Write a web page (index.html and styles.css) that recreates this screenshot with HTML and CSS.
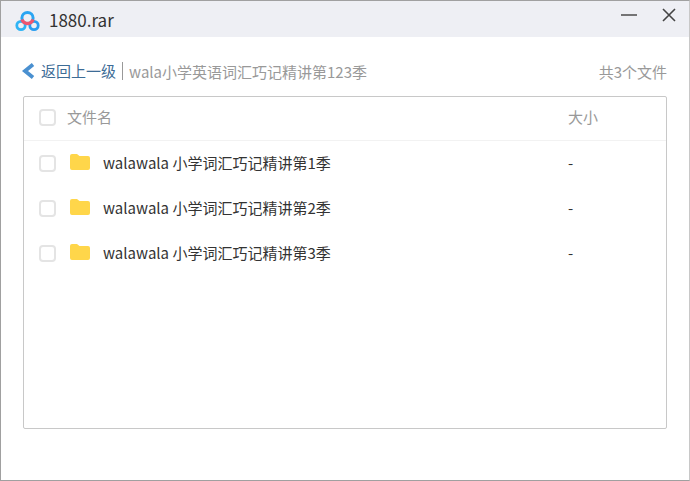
FILE: index.html
```html
<!DOCTYPE html>
<html lang="zh-CN">
<head>
<meta charset="utf-8">
<title>1880.rar</title>
<link rel="stylesheet" href="styles.css">
</head>
<body>
<div class="window">
  <header class="titlebar">
    <svg class="logo" width="26" height="22" viewBox="0 0 26 22" fill="none">
      <circle cx="12.5" cy="8" r="5.6" stroke="#2aa5f2" stroke-width="3"/>
      <circle cx="6" cy="15.5" r="4.2" stroke="#2fb4f5" stroke-width="2.8"/>
      <circle cx="19" cy="15.5" r="4.2" stroke="#2a9df0" stroke-width="2.8"/>
      <path d="M7 9.5a5.8 5.8 0 0 0 11 0" fill="none" stroke="#f0566e" stroke-width="3.4"/>
    </svg>
    <span class="filename">1880.rar</span>
    <div class="controls">
      <svg width="16" height="16" viewBox="0 0 16 16"><path d="M0 8h16" stroke="#555" stroke-width="1.6"/></svg>
      <svg width="16" height="16" viewBox="0 0 16 16"><path d="M2 2l12 12M14 2L2 14" stroke="#444" stroke-width="1.6"/></svg>
    </div>
  </header>
  <main class="content">
    <div class="crumbs">
      <svg class="back-icon" width="14" height="16" viewBox="0 0 14 16"><path d="M12 1.5L4 8l8 6.5" fill="none" stroke="#4a90d0" stroke-width="3.8"/></svg>
      <span class="back">返回上一级</span>
      <span class="path">wala小学英语词汇巧记精讲第123季</span>
      <span class="count">共3个文件</span>
    </div>
    <section class="card">
      <div class="row head">
        <span class="check"></span>
        <span class="name">文件名</span>
        <span class="size">大小</span>
      </div>
      <div class="row item">
        <span class="check"></span>
        <svg class="folder" width="20" height="16" viewBox="0 0 20 16"><path d="M0 2a2 2 0 0 1 2-2h5l2.5 2H18a2 2 0 0 1 2 2v10a2 2 0 0 1-2 2H2a2 2 0 0 1-2-2z" fill="#ffd64a"/></svg>
        <span class="label">walawala 小学词汇巧记精讲第1季</span>
        <span class="size">-</span>
      </div>
      <div class="row item">
        <span class="check"></span>
        <svg class="folder" width="20" height="16" viewBox="0 0 20 16"><path d="M0 2a2 2 0 0 1 2-2h5l2.5 2H18a2 2 0 0 1 2 2v10a2 2 0 0 1-2 2H2a2 2 0 0 1-2-2z" fill="#ffd64a"/></svg>
        <span class="label">walawala 小学词汇巧记精讲第2季</span>
        <span class="size">-</span>
      </div>
      <div class="row item">
        <span class="check"></span>
        <svg class="folder" width="20" height="16" viewBox="0 0 20 16"><path d="M0 2a2 2 0 0 1 2-2h5l2.5 2H18a2 2 0 0 1 2 2v10a2 2 0 0 1-2 2H2a2 2 0 0 1-2-2z" fill="#ffd64a"/></svg>
        <span class="label">walawala 小学词汇巧记精讲第3季</span>
        <span class="size">-</span>
      </div>
    </section>
  </main>
</div>
</body>
</html>
```
FILE: styles.css
```css
* { box-sizing: border-box; }
html, body { margin: 0; padding: 0; }
body {
  width: 690px;
  height: 481px;
  overflow: hidden;
  background: #fff;
  font-family: "Noto Sans CJK SC", "Noto Sans", sans-serif;
  font-size: 15px;
}
.window {
  width: 690px;
  height: 481px;
  border: 1px solid #a0a0a0;
  border-right-color: #c8c8c8;
  display: flex;
  flex-direction: column;
}
.titlebar {
  height: 36px;
  background: #eeeff4;
  display: flex;
  align-items: center;
  padding: 0 12px 0 14px;
  flex: none;
}
.logo { flex: none; margin-top: 4px; }
.filename {
  margin-left: 8px;
  color: #333;
  font-size: 17px;
  padding-top: 1px;
}
.controls {
  margin-left: auto;
  display: flex;
  gap: 24px;
  margin-top: -8px;
}
.content {
  flex: 1;
  padding: 0 22px 51px;
  display: flex;
  flex-direction: column;
}
.crumbs {
  height: 59px;
  padding-top: 9px;
  display: flex;
  align-items: center;
  flex: none;
}
.back-icon { flex: none; margin-right: 4px; margin-left: -2px; }
.back { color: #3d6c96; padding-right: 6px; border-right: 1px solid #999; line-height: 18px; margin-left: 2px; }
.path { color: #999; margin-left: 6px; }
.count { margin-left: auto; color: #999; }
.card {
  flex: 1;
  border: 1px solid #c8c8c8;
  border-radius: 2px;
}
.row {
  display: flex;
  align-items: center;
  padding-left: 15px;
}
.head {
  height: 44px;
  padding-bottom: 2px;
  border-bottom: 1px solid #f2f2f2;
  color: #999;
}
.head .name, .head .size { padding-bottom: 2px; }
.item {
  height: 45px;
  color: #333;
}
.check {
  width: 17px;
  height: 17px;
  border: 2px solid #e4e4e4;
  border-radius: 4px;
  flex: none;
}
.name { margin-left: 11px; }
.folder { margin-left: 14px; flex: none; margin-top: -4px; }
.label { margin-left: 13px; padding-bottom: 3px; }
.item .size { padding-bottom: 2px; }
.size { margin-left: auto; width: 98px; flex: none; }
```
